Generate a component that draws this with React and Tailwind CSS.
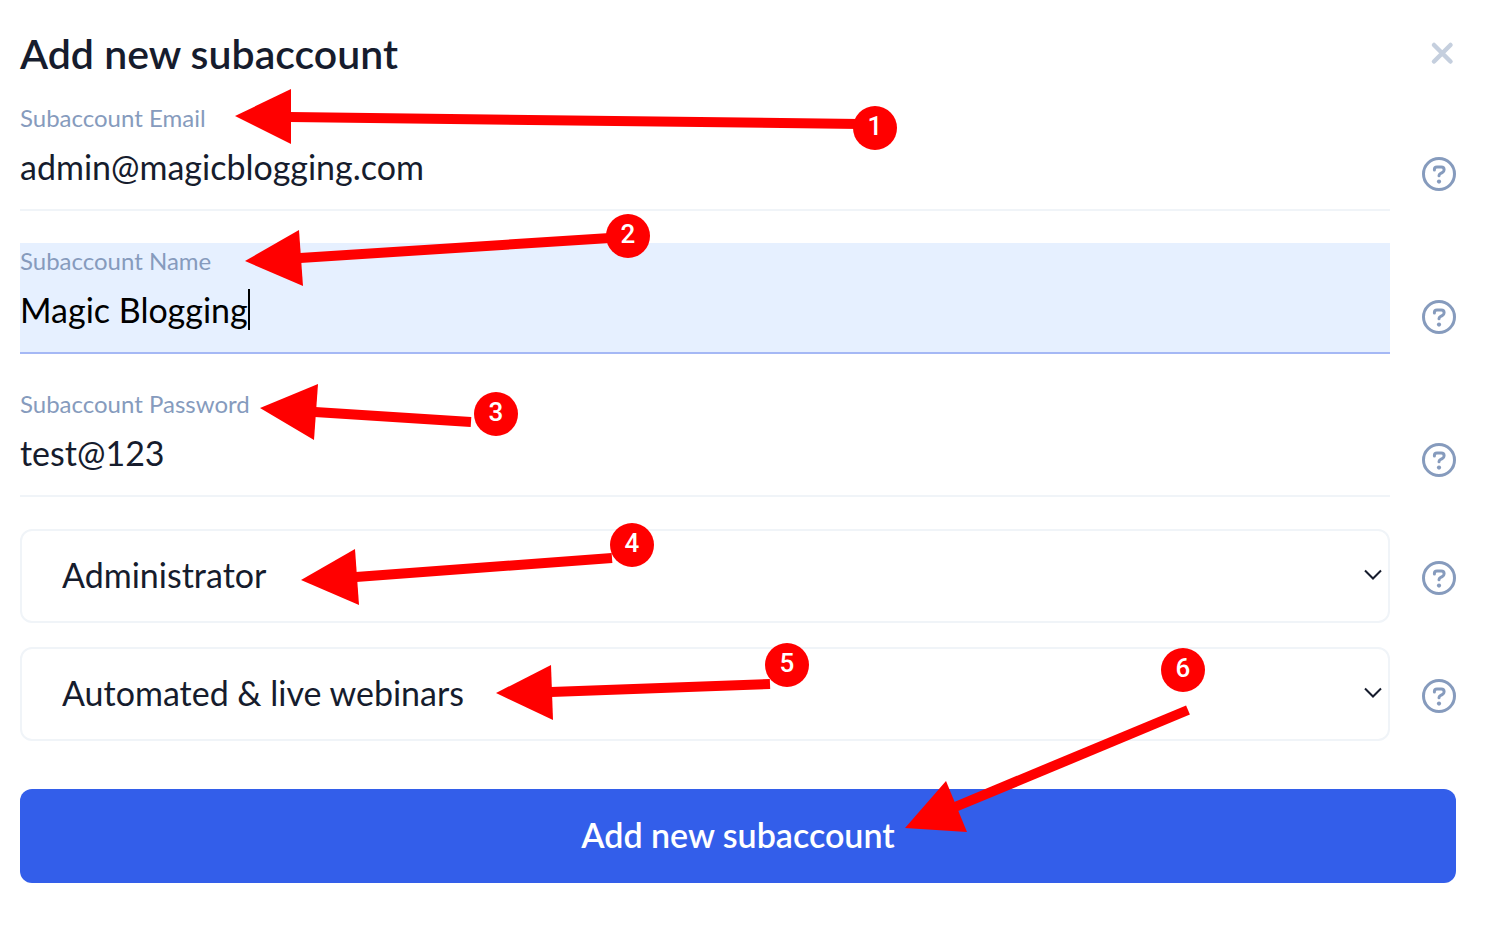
import React, { useState } from 'react';
import clsx from 'clsx';

const ROLES = ['Administrator', 'Moderator', 'Presenter'];
const ACCESS = ['Automated & live webinars', 'Automated webinars', 'Live webinars'];

// Tour steps: badge centre, arrow head and arrow tail
const STEPS = [
    { n: 1, badge: [875, 128], head: '235,116 291,89 291,144', shaft: [290, 117, 860, 124] },
    { n: 2, badge: [628, 236], head: '245,261 299,230 303,286', shaft: [300, 258, 610, 238] },
    { n: 3, badge: [496, 414], head: '260,408 318,384 314,440', shaft: [315, 412, 471, 422] },
    { n: 4, badge: [632, 545], head: '301,580 355,549 359,605', shaft: [356, 577, 612, 558] },
    { n: 5, badge: [787, 665], head: '496,693 551,665 553,720', shaft: [551, 692, 770, 684] },
    { n: 6, badge: [1183, 670], head: '905,828 946,781 967,832', shaft: [955, 807, 1188, 710] },
];

function HelpButton({ label }) {
    return (
        <button type="button" aria-label={label} className="block h-[34px] w-[34px] shrink-0 text-[#869bbd]">
            <svg viewBox="0 0 34 34" fill="none" stroke="currentColor" strokeWidth="3" className="block h-full w-full">
                <circle cx="17" cy="17" r="15.5" />
                <path d="M12.4 13v-.4c0-1.5 1-2.5 2.6-2.5h4.2c1.7 0 2.9 1 2.9 2.6 0 1.5-.6 2.2-1.9 2.9l-1.7.9c-1 .6-1.5 1.2-1.5 2.3" strokeLinecap="round" />
                <circle cx="17" cy="24.6" r="2.1" fill="currentColor" stroke="none" />
            </svg>
        </button>
    );
}

function Field({ id, label, type = 'text', value, onChange, active = false }) {
    return (
        <div className="flex items-end gap-8">
            <div
                className={clsx(
                    'flex min-w-0 flex-1 flex-col gap-3 border-b-2 pt-0.5 pb-[22px]',
                    active ? 'border-[#a5b8f5] bg-[#e6f0ff]' : 'border-[#f0f4f8]'
                )}
            >
                <label htmlFor={id} className="text-2xl leading-8 text-[#869bbd]">{label}</label>
                <div className="flex items-center">
                    <input
                        id={id}
                        type={type}
                        value={value}
                        onChange={(e) => onChange(e.target.value)}
                        className={clsx(
                            'h-[41px] bg-transparent text-[34px] leading-10 outline-none',
                            active ? '[field-sizing:content] text-black caret-transparent' : 'w-full text-[#161c2d]'
                        )}
                    />
                    {active && <span className="h-[41px] w-0.5 bg-black" />}
                </div>
            </div>
            <div className="pb-5">
                <HelpButton label={`Help: ${label}`} />
            </div>
        </div>
    );
}

function SelectField({ label, options, value, onChange }) {
    return (
        <div className="flex items-center gap-8">
            <div className="relative min-w-0 flex-1">
                <select
                    aria-label={label}
                    value={value}
                    onChange={(e) => onChange(e.target.value)}
                    className="block h-[94px] w-full appearance-none rounded-xl border-2 border-[#f0f4f8] bg-white px-10 pb-1 text-[34px] text-[#161c2d] outline-none"
                >
                    {options.map((option) => (
                        <option key={option}>{option}</option>
                    ))}
                </select>
                <svg viewBox="0 0 18 12" fill="none" stroke="#161c2d" strokeWidth="2" className="pointer-events-none absolute top-10 right-2 h-3 w-[18px]">
                    <path d="M1 1.5l8 8 8-8" />
                </svg>
            </div>
            <div className="pt-1">
                <HelpButton label={`Help: ${label}`} />
            </div>
        </div>
    );
}

function TourOverlay() {
    return (
        <svg width="1504" height="934" className="pointer-events-none absolute top-0 left-0" fill="#ff0000">
            {STEPS.map(({ n, badge: [cx, cy], head, shaft: [x1, y1, x2, y2] }) => (
                <g key={n}>
                    <line x1={x1} y1={y1} x2={x2} y2={y2} stroke="#ff0000" strokeWidth="10" />
                    <polygon points={head} />
                    <circle cx={cx} cy={cy} r="22" />
                    <text x={cx} y={cy + 7} textAnchor="middle" fill="#ffffff" className="font-['Roboto',sans-serif] text-[26px] font-medium">
                        {n}
                    </text>
                </g>
            ))}
        </svg>
    );
}

export default function App() {
    const [email, setEmail] = useState('admin@magicblogging.com');
    const [name, setName] = useState('Magic Blogging');
    const [password, setPassword] = useState('test@123');
    const [role, setRole] = useState(ROLES[0]);
    const [access, setAccess] = useState(ACCESS[0]);

    return (
        <div className="relative min-h-screen overflow-hidden bg-white font-['Lato',sans-serif]">
            <form onSubmit={(e) => e.preventDefault()} className="pt-7 pr-12 pb-12 pl-5">
                {/* Header */}
                <div className="mb-5 flex items-center justify-between">
                    <h1 className="text-[41px] leading-[52px] font-semibold text-[#161c2d]">Add new subaccount</h1>
                    <button type="button" aria-label="Close" className="px-0.5 pb-0.5 text-[#c5cfde]">
                        <svg viewBox="0 0 24 24" fill="none" stroke="currentColor" strokeWidth="4.5" strokeLinecap="round" className="block h-6 w-6">
                            <path d="M4 4l16.5 16.5M20.5 4L4 20.5" />
                        </svg>
                    </button>
                </div>

                <div className="flex flex-col gap-8">
                    <Field id="email" label="Subaccount Email" type="email" value={email} onChange={setEmail} />
                    <Field id="name" label="Subaccount Name" value={name} onChange={setName} active />
                    <Field id="password" label="Subaccount Password" value={password} onChange={setPassword} />
                    <div className="flex flex-col gap-6">
                        <SelectField label="Role" options={ROLES} value={role} onChange={setRole} />
                        <SelectField label="Webinar access" options={ACCESS} value={access} onChange={setAccess} />
                    </div>
                </div>

                <button type="submit" className="mt-12 h-[94px] w-full rounded-xl bg-[#335eea] pb-1 text-[34px] font-semibold text-white">
                    Add new subaccount
                </button>
            </form>

            <TourOverlay />
        </div>
    );
}
